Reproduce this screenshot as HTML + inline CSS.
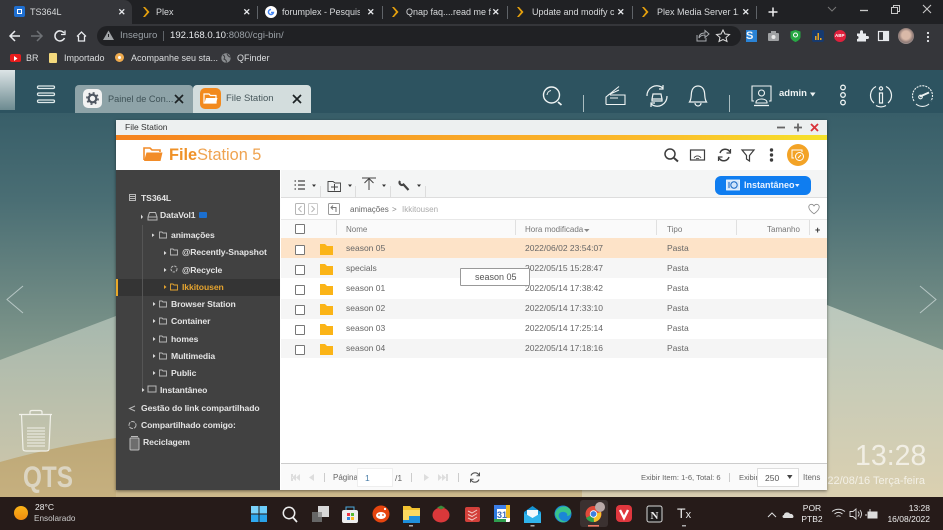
<!DOCTYPE html>
<html lang="pt"><head><meta charset="utf-8"><title>File Station</title>
<style>
html,body{margin:0;padding:0}
body{width:943px;height:530px;overflow:hidden;position:relative;background:#222;font-family:"Liberation Sans",sans-serif}
.a{position:absolute}
.t{position:absolute;white-space:nowrap;line-height:12px}
svg{position:absolute;overflow:visible}
.tab{font-size:9px;color:#d8dadc;top:6px}
.x{font-size:9px;color:#e8eaed;top:6px;font-weight:bold}
.side{color:#e4e4e4;font-size:8.6px;font-weight:bold;letter-spacing:-.08px}
.c{position:absolute;left:295px;width:8px;height:8px;border:1px solid #777;background:#fff;border-radius:1px}
.r{position:absolute;left:281px;width:546px}
.n{position:absolute;left:346px;font-size:8.5px;color:#666;white-space:nowrap;line-height:12px}
.d{position:absolute;left:525px;font-size:8.5px;color:#666;white-space:nowrap;line-height:12px}
.p{position:absolute;left:667px;font-size:8.5px;color:#666;white-space:nowrap;line-height:12px}
.h{font-size:8px;color:#777}
</style></head><body>

<!-- desktop wallpaper -->
<svg style="left:0;top:70px" width="943" height="428" viewBox="0 70 943 428">
<defs>
<linearGradient id="g1" x1="0" y1="0" x2="0" y2="1"><stop offset="0" stop-color="#2f5663"/><stop offset=".45" stop-color="#4a6e74"/><stop offset="1" stop-color="#83998c"/></linearGradient>
<linearGradient id="g2" x1="0" y1="0" x2="0" y2="1"><stop offset="0" stop-color="#a6b8ae"/><stop offset="1" stop-color="#d1c8aa"/></linearGradient>
<linearGradient id="g3" x1="0" y1="0" x2="0" y2="1"><stop offset="0" stop-color="#bda877"/><stop offset="1" stop-color="#c6b07f"/></linearGradient>
<linearGradient id="g4" x1="0" y1="0" x2="0" y2="1"><stop offset="0" stop-color="#bac8bd"/><stop offset="1" stop-color="#dbd0b0"/></linearGradient>
</defs>
<rect x="0" y="70" width="943" height="290" fill="url(#g1)"/>
<polygon points="0,360 116,316 116,498 0,498" fill="url(#g2)"/>
<path d="M0,462 Q60,445 116,438 L116,498 L0,498Z" fill="url(#g3)"/>
<polygon points="827,305 943,350 943,498 827,498" fill="url(#g4)"/>
<rect x="116" y="490" width="466" height="8" fill="#cdb98c"/>
<rect x="582" y="490" width="245" height="8" fill="#d8cdb0"/>
<path d="M23,286 L7,299.500 L23,313" fill="none" stroke="#c9d6d4" stroke-opacity=".8" stroke-width="1"/>
<path d="M920,286 L936,299.500 L920,313" fill="none" stroke="#c9d6d4" stroke-opacity=".8" stroke-width="1"/>
<!-- trash -->
<g fill="none" stroke="#f1f1ea" stroke-width="1.200">
<path d="M19,414.500 H52 M30,414 V412 Q30,410.500 32,410.500 H40 Q42,410.500 42,412 V414"/>
<path d="M21.500,415 L23,449 Q23,451 26,451 H46 Q49,451 49,449 L50.500,415"/>
<path d="M27,428H45 M27,431H45 M27,434H45 M27,437H45 M27,440H45 M27,443H45 M27,446H45" stroke-width="1"/>
</g>
</svg>
<div class="t" style="left:23px;top:463px;font-size:30px;line-height:30px;font-weight:bold;color:#dcd5c2;transform:scaleX(.81);transform-origin:left top">QTS</div>
<div class="t" style="left:855px;top:441px;font-size:28.500px;line-height:30px;color:#f1eee4;font-weight:normal">13:28</div>
<div class="t" style="left:827px;top:474px;font-size:11px;line-height:14px;color:#f3f0e6;overflow:hidden;width:98px;direction:rtl"><span style="direction:ltr;unicode-bidi:embed">2022/08/16 Terça-feira</span></div>

<!-- QTS top bar -->
<div class="a" style="left:0;top:70px;width:943px;height:43px;background:#2d5360"></div>
<div class="a" style="left:0;top:70px;width:15px;height:40px;background:linear-gradient(#dce4e6,#6c8a90)"></div>
<svg style="left:37px;top:85px" width="20" height="20"><g fill="none" stroke="#dfe9ea" stroke-width="1.300"><rect x=".5" y="1" width="17" height="2.500" rx="1.200"/><rect x=".5" y="8" width="17" height="2.500" rx="1.200"/><rect x=".5" y="15" width="17" height="2.500" rx="1.200"/></g></svg>
<div class="a" style="left:75px;top:85px;width:118px;height:28px;background:#8ea3a8;border-radius:4px 4px 0 0"></div>
<div class="a" style="left:83px;top:89px;width:19px;height:19px;background:#f2f2f2;border-radius:5px"></div>
<svg style="left:85px;top:91px" width="15" height="15" viewBox="0 0 15 15"><circle cx="7.500" cy="7.500" r="3.800" fill="none" stroke="#4e5560" stroke-width="2.200"/><circle cx="7.500" cy="7.500" r="5.600" fill="none" stroke="#4e5560" stroke-width="1.600" stroke-dasharray="2 2.400"/></svg>
<div class="t" style="left:108px;top:93px;font-size:9.200px;color:#3f5257">Painel de Con...</div>
<svg style="left:174px;top:94px" width="10" height="10"><path d="M1,1L9,9M9,1L1,9" stroke="#1c2224" stroke-width="1.700"/></svg>
<div class="a" style="left:193px;top:85px;width:118px;height:28px;background:#d3dddd;border-radius:4px 4px 0 0"></div>
<div class="a" style="left:200px;top:88px;width:21px;height:21px;background:#f28a1e;border-radius:5px"></div>
<svg style="left:203px;top:92px" width="15" height="13" viewBox="0 0 15 13"><path d="M1,2 H6 L7.500,3.500 H13 V11 H1Z" fill="none" stroke="#fff" stroke-width="1.200"/><path d="M1.500,11 L3,6 H14.500 L13,11Z" fill="#fff"/></svg>
<div class="t" style="left:226px;top:93px;font-size:9.500px;color:#47575b">File Station</div>
<svg style="left:292px;top:94px" width="10" height="10"><path d="M1,1L9,9M9,1L1,9" stroke="#1c2224" stroke-width="1.700"/></svg>

<!-- right icons -->
<svg style="left:540px;top:84px" width="24" height="24" viewBox="0 0 24 24"><g fill="none" stroke="#eef3f3" stroke-width="1.400"><circle cx="11.500" cy="11" r="8"/><path d="M18,18 L21.500,21" stroke-width="1.800"/><path d="M7,11 A5,5 0 0 1 11,6.500" stroke-width="1"/></g></svg>
<div class="a" style="left:583px;top:95px;width:1px;height:17px;background:#a9bcc0"></div>
<svg style="left:604px;top:84px" width="24" height="24" viewBox="0 0 24 24"><g fill="none" stroke="#eef3f3" stroke-width="1.100"><path d="M2,20.500 H21 V11 H6 M2,20.500 V13 L15,2.500 M4,11 L15,6 M6,14 H14"/></g></svg>
<svg style="left:645px;top:84px" width="24" height="24" viewBox="0 0 24 24"><g fill="none" stroke="#eef3f3" stroke-width="1.200"><path d="M2,12 A9.800,9.800 0 0 1 18,4 M22,12 A9.800,9.800 0 0 1 6,20"/><path d="M18,1 V5 H14 M6,23 V19 H10"/><path d="M8,10 H16 L17,15 H7Z M7,15 V17 H17 V15"/></g></svg>
<svg style="left:686px;top:84px" width="24" height="24" viewBox="0 0 24 24"><g fill="none" stroke="#eef3f3" stroke-width="1.200"><path d="M3.500,18 C5.500,15 5,12 5.500,8.500 C6,4.500 8.500,2 12,2 C15.500,2 18,4.500 18.500,8.500 C19,12 18.500,15 20.500,18 Z"/><path d="M9,19 A3,3 0 0 0 15,19"/></g></svg>
<div class="a" style="left:729px;top:95px;width:1px;height:17px;background:#a9bcc0"></div>
<svg style="left:751px;top:84px" width="22" height="24" viewBox="0 0 22 24"><g fill="none" stroke="#eef3f3" stroke-width="1.100"><path d="M3,17 H1 V2 H20 V17 H18"/><circle cx="10.500" cy="9" r="3"/><path d="M5,18 C6,14 15,14 16,18 V19 H5Z"/><path d="M3,21.500 H18" stroke-width="1.300"/></g></svg>
<div class="t" style="left:779px;top:88px;font-size:9.500px;font-weight:bold;color:#eef3f3">admin</div>
<svg style="left:810px;top:92px" width="6" height="5"><path d="M0,.5 H5.500 L2.750,4.500Z" fill="#eef3f3"/></svg>
<svg style="left:838px;top:84px" width="10" height="24"><g fill="none" stroke="#eef3f3" stroke-width="1.300"><circle cx="5" cy="3.500" r="2.300"/><circle cx="5" cy="11" r="2.300"/><circle cx="5" cy="18.500" r="2.300"/></g></svg>
<svg style="left:870px;top:84px" width="22" height="24" viewBox="0 0 22 24"><g fill="none" stroke="#eef3f3" stroke-width="1.200"><path d="M4,19 A10,10 0 0 1 6,2.500 M16,2.500 A10,10 0 0 1 18,19 M6,21.500 A10,10 0 0 0 16,21.500"/><circle cx="11" cy="4.500" r="1.600"/><path d="M9.500,9 H12.500 V19 H9.500Z"/></g></svg>
<svg style="left:911px;top:84px" width="23" height="24" viewBox="0 0 23 24"><g fill="none" stroke="#eef3f3" stroke-width="1.100"><path d="M3,17 A10,10 0 1 1 20,17" stroke-dasharray="2 1"/><path d="M5,20 A10,10 0 0 0 18,20"/><path d="M9,12.500 L18,8.500" stroke-width="1.800"/><circle cx="9.500" cy="13" r="1.800"/></g></svg>

<!-- File station window -->
<div class="a" style="left:116px;top:120px;width:711px;height:370px;background:#fff;box-shadow:0 1px 3px rgba(0,0,0,.5)"></div>
<div class="a" style="left:116px;top:120px;width:711px;height:15px;background:#edf0f0"></div>
<div class="t" style="left:125px;top:121px;font-size:8.500px;color:#333">File Station</div>
<svg style="left:776px;top:122px" width="46" height="11"><path d="M1,5.500H9" stroke="#666" stroke-width="1.800"/><path d="M18,5.500H26M22,1.500V9.500" stroke="#666" stroke-width="1.800"/><path d="M35,2L42,9M42,2L35,9" stroke="#d9333a" stroke-width="1.800"/></svg>
<div class="a" style="left:116px;top:135px;width:711px;height:5px;background:linear-gradient(90deg,#f5821e 0,#f8a126 40%,#fbbb2b 75%,#f6e22b 100%)"></div>
<svg style="left:143px;top:146px" width="20" height="17" viewBox="0 0 20 17"><path d="M1,14 V2 H7 L9,4 H17 V6" fill="none" stroke="#f28c28" stroke-width="1.600"/><path d="M1,15 L3.500,6.500 H19.500 L17.500,15Z" fill="#f28c28"/></svg>
<div class="t" style="left:169px;top:146px;font-size:16.300px;line-height:19px;color:#efa350"><b style="color:#ef9127">File</b>Station 5</div>
<svg style="left:663px;top:146px" width="150" height="20" viewBox="0 0 150 20">
<g fill="none" stroke="#3d3d3d" stroke-width="1.500"><circle cx="7" cy="8" r="5"/><path d="M11,12 L15,15.500" stroke-width="2"/>
<rect x="27.500" y="4" width="14" height="10" stroke-width="1.200"/><path d="M31,12 A4,4 0 0 1 38,12 M33,13 A2,2 0 0 1 36,13" stroke-width=".8"/>
<path d="M67,6 A5.500,5.500 0 0 0 57,7 M56,12 A5.500,5.500 0 0 0 66,11"/><path d="M67.500,3 V7 H63.500 M55.500,15 V11 H59.500" stroke-width="1.200"/>
<path d="M79,4 H91 L86.500,9.500 V15 L83.500,13 V9.500Z" stroke-width="1.200"/></g>
<circle cx="108.500" cy="4" r="1.700" fill="#3d3d3d"/><circle cx="108.500" cy="9" r="1.700" fill="#3d3d3d"/><circle cx="108.500" cy="14" r="1.700" fill="#3d3d3d"/>
</svg>
<div class="a" style="left:787px;top:144px;width:22px;height:22px;border-radius:50%;background:#f3a326"></div>
<svg style="left:791px;top:148px" width="14" height="14" viewBox="0 0 14 14"><path d="M3,10 H1 V2 H11 V4" fill="none" stroke="#fff" stroke-width="1"/><circle cx="8.500" cy="8.500" r="4" fill="none" stroke="#fff" stroke-width="1"/><path d="M7,10 L10,7" stroke="#fff"/></svg>

<!-- sidebar -->
<div class="a" style="left:116px;top:170px;width:164px;height:320px;background:#414141"></div>
<div class="a" style="left:116px;top:279px;width:164px;height:17px;background:#343434"></div>
<div class="a" style="left:116px;top:279px;width:2px;height:17px;background:#e9a828"></div>
<div class="a" style="left:142px;top:225px;width:1px;height:165px;background:#555"></div>
<div class="t side" style="left:141px;top:192px">TS364L</div>
<div class="t side" style="left:160px;top:209px">DataVol1</div>
<div class="a" style="left:199px;top:212px;width:8px;height:6px;background:#1b6fd0;border-radius:1px"></div>
<div class="t side" style="left:171px;top:229px">animações</div>
<div class="t side" style="left:182px;top:246px">@Recently-Snapshot</div>
<div class="t side" style="left:182px;top:264px">@Recycle</div>
<div class="t side" style="left:182px;top:281px;color:#e4a32f">Ikkitousen</div>
<div class="t side" style="left:171px;top:298px">Browser Station</div>
<div class="t side" style="left:171px;top:315px">Container</div>
<div class="t side" style="left:171px;top:333px">homes</div>
<div class="t side" style="left:171px;top:350px">Multimedia</div>
<div class="t side" style="left:171px;top:367px">Public</div>
<div class="t side" style="left:160px;top:384px">Instantâneo</div>
<div class="t side" style="left:141px;top:402px">Gestão do link compartilhado</div>
<div class="t side" style="left:141px;top:419px">Compartilhado comigo:</div>
<div class="t side" style="left:143px;top:436px">Reciclagem</div>
<svg style="left:116px;top:170px" width="164" height="290" viewBox="116 170 164 290">
<defs><g id="fo"><path d="M.5,1 H3 L4,2 H7.500 V7 H.5Z" fill="none" stroke-width=".9"/></g></defs>
<g fill="none" stroke="#b8b8b8" stroke-width="1">
<rect x="129.500" y="194.500" width="6" height="6"/><path d="M130,196.500H135M130,198.500H135"/>
<path d="M148,217 L149.500,212.500 H155.500 L157,217 V220 H148Z M148,217H157"/>
<use href="#fo" x="159" y="231"/><use href="#fo" x="170" y="248"/>
<circle cx="174" cy="269" r="3" stroke-dasharray="2.500 1"/>
<use href="#fo" x="159" y="300"/><use href="#fo" x="159" y="317"/><use href="#fo" x="159" y="335"/><use href="#fo" x="159" y="352"/><use href="#fo" x="159" y="369"/>
<rect x="148" y="386" width="8" height="6"/>
<path d="M135,406 L129.500,408.500 L135,411"/>
<circle cx="132.500" cy="425" r="3.500" stroke-dasharray="4 1"/>
</g>
<g fill="none" stroke="#e4a32f"><use href="#fo" x="170" y="283"/></g>
<rect x="130" y="438" width="9" height="12" rx="1" fill="#6d6d6d" stroke="#bcbcbc"/><path d="M131,436.500H138" stroke="#bcbcbc"/>
<g fill="#ddd">
<path d="M141,214.500 V219 L143,217Z M152,233.500 L152,237 L154.500,235Z M164,251 V255 L166.500,253Z M164,268 V272 L166.500,270Z M153,302 V306 L155.500,304Z M153,319 V323 L155.500,321Z M153,337 V341 L155.500,339Z M153,354 V358 L155.500,356Z M153,371 V375 L155.500,373Z M142,388 V392 L144.500,390Z"/>
<path d="M164,285 V289 L166.500,287Z" fill="#e4a32f"/></g>
</svg>

<!-- toolbar -->
<div class="a" style="left:281px;top:170px;width:546px;height:28px;background:#f4f5f5;border-bottom:1px solid #ddd;box-sizing:border-box"></div>
<svg style="left:293px;top:176px" width="140" height="22" viewBox="293 176 140 22">
<g stroke="#444" fill="none"><path d="M298,181H305M298,185H305M298,189H305M294.500,181H296M294.500,185H296M294.500,189H296" stroke-width="1.200"/>
<path d="M328,181.500 H333 L335,183 H340.500 V191.500 H328Z" stroke-width=".9"/><path d="M331,187H338 M334.500,184 V190.500" stroke-width="1"/>
<path d="M362,178H376 M369,190 V179 M364.500,183 L369,178.500 L373.500,183" stroke-width="1"/>
<path d="M400,181 A2.500,2.500 0 0 0 403.500,184.500 L408.500,190" stroke-width="2.200"/></g>
<path d="M312,184.500H316L314,187Z M348,184.500H352L350,187Z M382,184.500H386L384,187Z M417,184.500H421L419,187Z" fill="#333"/>
<path d="M320.500,186V198M355.500,186V198M390.500,186V198M425.500,186V198" stroke="#ddd" stroke-width="1"/>
</svg>
<div class="a" style="left:715px;top:176px;width:96px;height:19px;background:#0f7df0;border-radius:6px"></div>
<svg style="left:726px;top:179px" width="14" height="13" viewBox="0 0 14 13"><rect x=".5" y="1" width="13" height="10" fill="#cfe3fb" stroke="#fff" stroke-width=".8"/><circle cx="8" cy="6" r="3.200" fill="none" stroke="#1466c4"/><path d="M3,3V9" stroke="#1466c4"/></svg>
<div class="t" style="left:744px;top:179px;font-size:9px;color:#e6f1ff;font-weight:bold">Instantâneo</div>
<svg style="left:795px;top:184px" width="5" height="4"><path d="M0,0H4.500L2.250,3Z" fill="#e6f1ff"/></svg>

<!-- breadcrumb -->
<svg style="left:294px;top:202px" width="50" height="14" viewBox="294 202 50 14"><g fill="none" stroke="#b5b5b5"><rect x="295.500" y="203.500" width="9" height="11" rx="1"/><rect x="308.500" y="203.500" width="9" height="11" rx="1" stroke="#ccc"/><path d="M301.500,206 L298.500,209 L301.500,212M311.500,206L314.500,209L311.500,212"/><rect x="328.500" y="203.500" width="11" height="11" rx="1" stroke="#999"/><path d="M331,207.500 H336 V212 M333,205.500 L331,207.500 L333,209.500" stroke="#777"/></g></svg>
<div class="t" style="left:350px;top:204px;font-size:8px;color:#666">animações</div>
<div class="t" style="left:392px;top:204px;font-size:8px;color:#888">&gt;</div>
<div class="t" style="left:402px;top:204px;font-size:8px;color:#aaa">Ikkitousen</div>
<svg style="left:808px;top:203px" width="12" height="12" viewBox="0 0 12 12"><path d="M6,10.800 C2,8 .8,6 .8,4 C.8,2.300 2,1.300 3.300,1.300 C4.500,1.300 5.500,2 6,3 C6.500,2 7.500,1.300 8.700,1.300 C10,1.300 11.200,2.300 11.200,4 C11.200,6 10,8 6,10.800Z" fill="none" stroke="#888" stroke-width=".8"/></svg>

<!-- table header -->
<div class="a" style="left:281px;top:219px;width:546px;height:19px;background:#fafafa;border-top:1px solid #e8e8e8;box-sizing:border-box"></div>
<div class="c" style="top:224px"></div>
<div class="t h" style="left:346px;top:224px">Nome</div>
<div class="t h" style="left:525px;top:224px">Hora modificada</div>
<svg style="left:584px;top:229px" width="6" height="4"><path d="M0,0H5.500L2.750,3Z" fill="#888"/></svg>
<div class="t h" style="left:667px;top:224px">Tipo</div>
<div class="t h" style="left:767px;top:224px">Tamanho</div>
<div class="t" style="left:815px;top:224px;font-size:9px;color:#333;font-weight:bold">+</div>
<svg style="left:336px;top:219px" width="490" height="19" viewBox="336 219 490 19"><path d="M336.500,220V235M515.500,220V235M656.500,220V235M736.500,220V235M809.500,220V235" stroke="#e0e0e0"/></svg>

<!-- rows -->
<div class="r" style="top:238px;height:20px;background:#fde3c8"></div>
<div class="r" style="top:258px;height:20px;background:#f6f6f6"></div>
<div class="r" style="top:299px;height:20px;background:#f5f5f5"></div>
<div class="r" style="top:339px;height:19px;background:#f5f5f5"></div>
<div class="c" style="top:245px"></div><div class="c" style="top:265px"></div><div class="c" style="top:285px"></div><div class="c" style="top:305px"></div><div class="c" style="top:325px"></div><div class="c" style="top:345px"></div>
<svg style="left:320px;top:240px" width="14" height="120" viewBox="320 240 14 120"><defs><path id="yf" d="M0,0 H5 L7,2 H13 V11 H0Z" fill="#fbb417"/></defs><use href="#yf" x="320" y="244"/><use href="#yf" x="320" y="264"/><use href="#yf" x="320" y="284"/><use href="#yf" x="320" y="304"/><use href="#yf" x="320" y="324"/><use href="#yf" x="320" y="344"/></svg>
<div class="n" style="top:242px">season 05</div><div class="d" style="top:242px">2022/06/02 23:54:07</div><div class="p" style="top:242px">Pasta</div>
<div class="n" style="top:262px">specials</div><div class="d" style="top:262px">2022/05/15 15:28:47</div><div class="p" style="top:262px">Pasta</div>
<div class="n" style="top:282px">season 01</div><div class="d" style="top:282px">2022/05/14 17:38:42</div><div class="p" style="top:282px">Pasta</div>
<div class="n" style="top:302px">season 02</div><div class="d" style="top:302px">2022/05/14 17:33:10</div><div class="p" style="top:302px">Pasta</div>
<div class="n" style="top:322px">season 03</div><div class="d" style="top:322px">2022/05/14 17:25:14</div><div class="p" style="top:322px">Pasta</div>
<div class="n" style="top:342px">season 04</div><div class="d" style="top:342px">2022/05/14 17:18:16</div><div class="p" style="top:342px">Pasta</div>
<!-- drag tooltip -->
<div class="a" style="left:460px;top:268px;width:70px;height:18px;background:#fff;border:1px solid #999;box-sizing:border-box;border-radius:1px"></div>
<div class="t" style="left:475px;top:271px;font-size:9px;color:#555">season 05</div>

<!-- footer -->
<div class="a" style="left:281px;top:463px;width:546px;height:27px;background:#fafafa;border-top:1px solid #ccc;box-sizing:border-box"></div>
<svg style="left:288px;top:472px" width="200" height="12" viewBox="288 472 200 12"><g fill="#ddd"><path d="M296,474V481L292,477.500Z M300,474V481L296,477.500Z M293,474H291V481H293Z M314,474V481L309,477.500Z M424,474V481L429,477.500Z M438,474V481L442,477.500Z M442,474V481L446,477.500Z M446,474H448V481H446Z"/></g><path d="M324.500,473V482M411.500,473V482M458.500,473V482" stroke="#ccc"/></svg>
<div class="t" style="left:333px;top:472px;font-size:8px;color:#666">Página</div>
<div class="a" style="left:357px;top:468px;width:36px;height:19px;background:#fff;border:1px solid #eee;box-sizing:border-box"></div>
<div class="t" style="left:365px;top:472px;font-size:8.500px;color:#4a7ea8">1</div>
<div class="t" style="left:395px;top:472px;font-size:8.500px;color:#666">/1</div>
<svg style="left:469px;top:471px" width="12" height="13" viewBox="0 0 12 13"><path d="M10,4 A4.500,4.500 0 0 0 2,4.500 M2,9 A4.500,4.500 0 0 0 10,8.500" fill="none" stroke="#555" stroke-width="1.200"/><path d="M10.500,1.500V4.800H7.500M1.500,11.500V8.200H4.500" fill="none" stroke="#555"/></svg>
<div class="t" style="left:641px;top:472px;font-size:7.600px;color:#666">Exibir Item: 1-6, Total: 6</div>
<div class="a" style="left:729px;top:473px;width:1px;height:9px;background:#ccc"></div>
<div class="t" style="left:739px;top:472px;font-size:7.600px;color:#666">Exibir</div>
<div class="a" style="left:757px;top:468px;width:42px;height:19px;background:#fff;border:1px solid #ddd;box-sizing:border-box"></div>
<div class="t" style="left:765px;top:472px;font-size:8.500px;color:#555">250</div>
<svg style="left:787px;top:475px" width="6" height="5"><path d="M0,0H5.500L2.750,4Z" fill="#444"/></svg>
<div class="t" style="left:803px;top:472px;font-size:8px;color:#666">Itens</div>

<!-- Chrome -->
<div class="a" style="left:0;top:0;width:943px;height:24px;background:#202124"></div>
<div class="a" style="left:0;top:24px;width:943px;height:46px;background:#35363a"></div>
<div class="a" style="left:0;top:0;width:132px;height:24px;background:#35363a;border-radius:0 8px 0 0"></div>
<div class="a" style="left:14px;top:6px;width:11px;height:11px;background:#1f6fd0;border-radius:2px"></div>
<div class="a" style="left:17px;top:9px;width:3px;height:3px;border:1px solid #fff"></div>
<div class="t tab" style="left:30px">TS364L</div><div class="t x" style="left:118px">✕</div>
<svg style="left:142px;top:6px" width="8" height="12"><path d="M1,1L5,6L1,11H3L7.500,6L3,1Z" fill="#e5a00d"/></svg>
<div class="t tab" style="left:156px">Plex</div><div class="t x" style="left:243px">✕</div>
<div class="a" style="left:257px;top:6px;width:1px;height:13px;background:#5f6368"></div>
<svg style="left:265px;top:6px" width="12" height="12" viewBox="0 0 12 12"><circle cx="6" cy="6" r="6" fill="#fff"/><path d="M6,3.500A2.500,2.500 0 1 0 8.400,6.500H6" fill="none" stroke="#4285f4" stroke-width="1.500"/></svg>
<div class="t tab" style="left:282px;overflow:hidden;width:78px">forumplex - Pesquisa</div><div class="t x" style="left:367px">✕</div>
<div class="a" style="left:382px;top:6px;width:1px;height:13px;background:#5f6368"></div>
<svg style="left:391px;top:6px" width="8" height="12"><path d="M1,1L5,6L1,11H3L7.500,6L3,1Z" fill="#e5a00d"/></svg>
<div class="t tab" style="left:406px">Qnap faq....read me f</div><div class="t x" style="left:492px">✕</div>
<div class="a" style="left:507px;top:6px;width:1px;height:13px;background:#5f6368"></div>
<svg style="left:516px;top:6px" width="8" height="12"><path d="M1,1L5,6L1,11H3L7.500,6L3,1Z" fill="#e5a00d"/></svg>
<div class="t tab" style="left:532px;overflow:hidden;width:82px">Update and modify cc</div><div class="t x" style="left:617px">✕</div>
<div class="a" style="left:632px;top:6px;width:1px;height:13px;background:#5f6368"></div>
<svg style="left:641px;top:6px" width="8" height="12"><path d="M1,1L5,6L1,11H3L7.500,6L3,1Z" fill="#e5a00d"/></svg>
<div class="t tab" style="left:657px;overflow:hidden;width:82px">Plex Media Server 1.12</div><div class="t x" style="left:742px">✕</div>
<div class="a" style="left:756px;top:6px;width:1px;height:13px;background:#5f6368"></div>
<svg style="left:767px;top:6px" width="12" height="12"><path d="M6,1.500V10.500M1.500,6H10.500" stroke="#eee" stroke-width="1.500"/></svg>
<svg style="left:825px;top:3px" width="112" height="14" viewBox="825 3 112 14"><g fill="none" stroke="#c8c8c8" stroke-width="1"><path d="M828,7L832,11L836,7" stroke="#777"/><path d="M860,10.500H868" stroke-width="1.300"/><rect x="891.500" y="7.500" width="6" height="6"/><path d="M893.500,7.500V5.500H899.500V11.500H897.500"/><path d="M923,5L931,13M931,5L923,13" stroke-width="1.100"/></g></svg>

<!-- nav row -->
<svg style="left:8px;top:27px" width="80" height="18" viewBox="8 27 80 18"><g fill="none" stroke="#e8eaed" stroke-width="1.500"><path d="M10,36H20M15,31L10,36L15,41"/><path d="M31,36H42M37,31L42,36L37,41" stroke="#6f7276"/><path d="M64,33 A5,5 0 1 0 64.500,38"/><path d="M65,30.500V34.500H61" stroke-width="1.300"/><path d="M77,36.500L81.500,32L86,36.500M78.500,36V41H84.500V36" stroke-width="1.300"/></g></svg>
<div class="a" style="left:97px;top:26px;width:168px;height:20px;background:#202124;border-radius:10px 0 0 10px"></div>
<div class="a" style="left:265px;top:26px;width:476px;height:20px;background:#202124;border-radius:0 10px 10px 0"></div>
<svg style="left:103px;top:30px" width="12" height="11"><path d="M5.500,.5L11,10H0Z" fill="#a0a3a6"/><path d="M5.500,4V7" stroke="#202124"/></svg>
<div class="t" style="left:120px;top:30px;font-size:9.600px;color:#9aa0a6">Inseguro</div>
<div class="a" style="left:163px;top:31px;width:1px;height:10px;background:#5f6368"></div>
<div class="t" style="left:170px;top:30px;font-size:9.600px;color:#e8eaed">192.168.0.10<span style="color:#9aa0a6">:8080/cgi-bin/</span></div>
<svg style="left:695px;top:29px" width="40" height="14" viewBox="695 29 40 14"><g fill="none" stroke="#a8abaf"><path d="M697,35V41H706V38"/><path d="M699,38C699,34 702,33 705,33V30.500L709,34L705,37.500V35C702,35 700,36 699,38Z"/><path d="M723,30L725,34L729.500,34.500L726,37.500L727,41.500L723,39.500L719,41.500L720,37.500L716.500,34.500L721,34Z" stroke="#e0e0e0"/></g></svg>
<!-- extension icons -->
<div class="a" style="left:746px;top:30px;width:11px;height:12px;background:#2a83d6"></div>
<div class="t" style="left:746px;top:30px;font-size:11px;font-weight:bold;color:#f3f6fa">S</div>
<svg style="left:768px;top:31px" width="11" height="10"><rect y="2" width="11" height="8" rx="1" fill="#9fa1a3"/><rect x="3" width="5" height="3" fill="#9fa1a3"/><circle cx="5.500" cy="6" r="2" fill="#e8e8e8"/></svg>
<svg style="left:790px;top:30px" width="11" height="12"><path d="M.5,1.500L5.500,0L10.500,1.500V7C10.500,9.500 7,11.500 5.500,12C4,11.500 .5,9.500 .5,7Z" fill="#27a844"/><circle cx="5.500" cy="5" r="2" fill="none" stroke="#fff"/></svg>
<div class="a" style="left:812px;top:30px;width:12px;height:12px;background:#173a6e;border-radius:2px"></div>
<svg style="left:814px;top:32px" width="8" height="8"><path d="M1,8V4H2.500V8ZM3.500,8V1H5V8ZM6,8V6H7.500V8Z" fill="#e8a422"/></svg>
<div class="a" style="left:834px;top:30px;width:12px;height:12px;background:#e0203c;border-radius:50%"></div>
<div class="t" style="left:835px;top:30px;font-size:4.500px;font-weight:bold;color:#fff">ABP</div>
<svg style="left:856px;top:30px" width="12" height="12" viewBox="0 0 12 12"><path d="M1,3.500H4V1.800A1.500,1.500 0 0 1 7,1.800V3.500H10V6H11.500A1.500,1.500 0 0 1 11.500,9H10V11.500H1V9A1.500,1.500 0 0 0 1,6Z" fill="#e8eaed"/></svg>
<svg style="left:878px;top:31px" width="11" height="10"><rect x=".5" y=".5" width="10" height="9" fill="none" stroke="#e8eaed" stroke-width="1.200"/><rect x="5" y="1" width="5" height="8" fill="#e8eaed"/></svg>
<div class="a" style="left:898px;top:28px;width:16px;height:16px;border-radius:50%;background:radial-gradient(circle at 50% 45%,#d9b9a8 0 35%,#8e7a76 60%,#c4c4c8 100%)"></div>
<svg style="left:926px;top:31px" width="4" height="12"><circle cx="2" cy="2" r="1.100" fill="#e8eaed"/><circle cx="2" cy="6" r="1.100" fill="#e8eaed"/><circle cx="2" cy="10" r="1.100" fill="#e8eaed"/></svg>

<!-- bookmarks -->
<div class="a" style="left:10px;top:54px;width:11px;height:8px;background:#e81c1c;border-radius:2px"></div>
<svg style="left:14px;top:55.500px" width="4" height="5"><path d="M0,0L3.500,2.500L0,5Z" fill="#fff"/></svg>
<div class="t" style="left:26px;top:52px;font-size:9px;color:#dcdee0">BR</div>
<div class="a" style="left:49px;top:53px;width:8px;height:10px;background:#f4d97d;border-radius:1px"></div>
<div class="t" style="left:64px;top:52px;font-size:9px;color:#dcdee0">Importado</div>
<div class="a" style="left:115px;top:53px;width:9px;height:9px;background:#eeaa4e;border-radius:50%"></div>
<div class="a" style="left:118px;top:56px;width:3px;height:3px;background:#fff;border-radius:50%"></div>
<div class="t" style="left:131px;top:52px;font-size:9px;color:#dcdee0">Acompanhe seu sta...</div>
<svg style="left:221px;top:53px" width="10" height="10"><circle cx="5" cy="5" r="4.700" fill="#8a8d90"/><path d="M2,2C4,3 4,5 3,6C5,7 6,8 5,9.500M6,1C7,3 8,4 9.500,4" fill="none" stroke="#3a3b3e"/></svg>
<div class="t" style="left:237px;top:52px;font-size:9px;color:#dcdee0">QFinder</div>

<!-- Taskbar -->
<div class="a" style="left:0;top:497px;width:943px;height:33px;background:#261b19"></div>
<div class="a" style="left:14px;top:506px;width:14px;height:14px;border-radius:50%;background:linear-gradient(#fbb418,#f08c10)"></div>
<div class="t" style="left:35px;top:502px;font-size:8.500px;line-height:11px;color:#eee">28°C</div>
<div class="t" style="left:34px;top:513px;font-size:8.200px;line-height:11px;color:#ccc">Ensolarado</div>
<svg style="left:250px;top:503px" width="420" height="27" viewBox="250 503 420 27">
<!-- windows -->
<g fill="#4cc2ff"><rect x="251" y="506" width="7.500" height="7.500" fill="#7bd3fb"/><rect x="259.500" y="506" width="7.500" height="7.500" fill="#6ccdfa"/><rect x="251" y="514.500" width="7.500" height="7.500" fill="#2fa8ee"/><rect x="259.500" y="514.500" width="7.500" height="7.500" fill="#2aa2e8"/></g>
<!-- search -->
<circle cx="289" cy="513" r="5.700" fill="none" stroke="#eee" stroke-width="1.500"/><path d="M293,517.500L297,522" stroke="#eee" stroke-width="1.700"/>
<!-- task view -->
<rect x="312" y="512" width="10" height="10" fill="#666"/><rect x="318" y="506" width="11" height="11" fill="#d8d8d8"/><rect x="318" y="512" width="4" height="5" fill="#9a9a9a"/>
<!-- store -->
<rect x="342" y="510" width="16" height="13" rx="2" fill="#eee"/><path d="M346,510V507H354V510" fill="none" stroke="#4aa8dc"/><rect x="347" y="513" width="3" height="3" fill="#e34"/><rect x="351" y="513" width="3" height="3" fill="#5b3"/><rect x="347" y="517" width="3" height="3" fill="#38d"/><rect x="351" y="517" width="3" height="3" fill="#fb2"/>
<!-- reddit -->
<circle cx="381" cy="514" r="8.500" fill="#e6450f"/><ellipse cx="381" cy="515.500" rx="5" ry="3.500" fill="#fff"/><circle cx="379" cy="515" r=".9" fill="#e6450f"/><circle cx="383" cy="515" r=".9" fill="#e6450f"/><circle cx="385" cy="509" r="1.100" fill="#fff"/>
<!-- explorer -->
<path d="M403,506H410L412,508H420V523H403Z" fill="#f3c330"/><rect x="403" y="510" width="17" height="13" fill="#fbd960"/><rect x="409" y="516" width="11" height="7" fill="#1f8fdb"/><rect x="403" y="520" width="6" height="3" fill="#1f8fdb"/>
<rect x="409" y="525" width="4" height="1.500" fill="#aaa"/>
<!-- tomato -->
<ellipse cx="441" cy="515" rx="8.500" ry="7.500" fill="#d9383a"/><path d="M437,507.500L441,509.500L445,507.500L441,505.500Z" fill="#3c8a3a"/>
<!-- todoist -->
<rect x="465" y="507" width="15" height="15" rx="2" fill="#d3403a"/><path d="M468,511L472,513L477,510M468,514.500L472,516.500L477,513.500M468,518L472,520L477,517" stroke="#f3c8c4" fill="none"/>
<!-- calendar -->
<rect x="494" y="505" width="16" height="17" rx="1" fill="#fff"/><path d="M494,505H510V509H494Z" fill="#3d7fe8"/><path d="M494,509V520H497V509Z" fill="#2d7be0"/><path d="M510,505V518H506V505Z" fill="#eeba22"/><path d="M494,519H506V522H494Z" fill="#2f9e4e"/>
<text x="502" y="518" font-size="9" font-weight="bold" text-anchor="middle" fill="#3d6dbd" font-family="Liberation Sans">31</text>
<!-- mail -->
<path d="M524,512L532.500,506L541,512V523H524Z" fill="#1693d2"/><path d="M527,510H538V516L532.500,519L527,516Z" fill="#f2f8fb"/><path d="M524,513L532.500,518L541,513V523H524Z" fill="#30b4ec"/><rect x="530.500" y="525" width="4" height="1.500" fill="#aaa"/>
<!-- edge -->
<circle cx="563" cy="514" r="8.500" fill="#1b86d6"/><path d="M555,514C556,507 565,504 570,509C572,512 571,516 567,516C569,512 561,510 559,514C557,518 563,523 568,521C564,524 557,522 555,514Z" fill="#39c48a"/>
<!-- chrome active -->
<rect x="580" y="500" width="28" height="27" rx="3" fill="#3b3130"/>
<circle cx="593.500" cy="514" r="8" fill="#e04a3a"/><path d="M593.500,514L586,518A8,8 0 0 0 594,522Z" fill="#2fa24f"/><path d="M593.500,514L601,512A8,8 0 0 1 594,522Z" fill="#f5c12a"/><circle cx="593.500" cy="514" r="3.700" fill="#fff"/><circle cx="593.500" cy="514" r="2.900" fill="#3d80e0"/>
<circle cx="600" cy="507" r="5" fill="#b9a9a8"/>
<rect x="588" y="525" width="11" height="1.600" fill="#ef7a62"/>
<!-- vivaldi -->
<rect x="616" y="505" width="16" height="17" rx="4" fill="#e0373e"/><path d="M620,510L624,518L628,510" fill="none" stroke="#fff" stroke-width="2.400"/>
<!-- notion -->
<rect x="647" y="506" width="15" height="16" rx="2" fill="#1d1b1b" stroke="#d8d8d8"/>
<text x="654.500" y="519" font-size="11" font-weight="bold" text-anchor="middle" fill="#eee" font-family="Liberation Serif">N</text>
<rect x="682" y="525" width="4" height="1.500" fill="#aaa"/>
</svg>
<div class="t" style="left:677px;top:505px;font-size:14px;line-height:16px;color:#e8e8e8">T<span style="font-size:11px">x</span></div>
<svg style="left:767px;top:505px" width="110" height="17" viewBox="767 505 110 17">
<g fill="none" stroke="#ddd"><path d="M768,517L772,513L776,517"/>
<path d="M832,511.500C836,508.500 841,508.500 845,511.500M834.500,514C837,512 840,512 842.500,514M836.500,516.500C838,515.500 839,515.500 840.500,516.500" stroke-width=".9"/>
<path d="M850,511.500H853L856,509V519L853,516.500H850ZM858,511.500C859.500,513 859.500,515 858,516.500M860,510C862,512.500 862,515.500 860,518" stroke-width=".9"/>
<rect x="868" y="512" width="9" height="6" fill="#ddd"/><path d="M866,514V516M870,509L870,512"/></g>
<path d="M784,518C782,518 782,515 784,515C784,512 789,511.500 790,514C793,513 795,518 792,518Z" fill="#ddd"/>
</svg>
<div class="t" style="left:796px;top:503px;font-size:8.500px;line-height:11px;color:#eee;text-align:center;width:32px">POR</div>
<div class="t" style="left:796px;top:514px;font-size:8.500px;line-height:11px;color:#eee;text-align:center;width:32px">PTB2</div>
<div class="t" style="left:885px;top:503px;font-size:8.500px;line-height:11px;color:#eee;text-align:right;width:45px">13:28</div>
<div class="t" style="left:885px;top:514px;font-size:8.500px;line-height:11px;color:#eee;text-align:right;width:45px">16/08/2022</div>

</body></html>
